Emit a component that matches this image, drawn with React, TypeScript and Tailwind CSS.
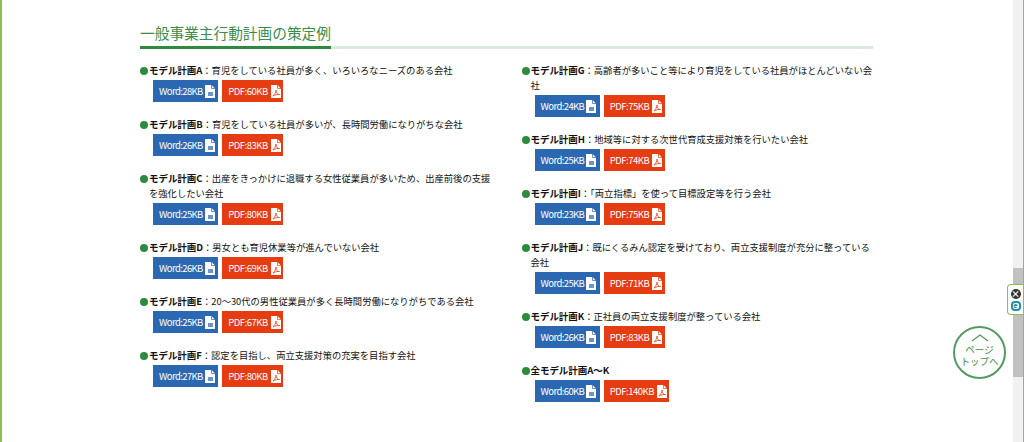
const leftPlans = [
  { name: "モデル計画A", text: "：育児をしている社員が多く、いろいろなニーズのある会社", word: "28", pdf: "60" },
  { name: "モデル計画B", text: "：育児をしている社員が多いが、長時間労働になりがちな会社", word: "26", pdf: "83" },
  { name: "モデル計画C", text: "：出産をきっかけに退職する女性従業員が多いため、出産前後の支援を強化したい会社", word: "25", pdf: "80" },
  { name: "モデル計画D", text: "：男女とも育児休業等が進んでいない会社", word: "26", pdf: "69" },
  { name: "モデル計画E", text: "：20〜30代の男性従業員が多く長時間労働になりがちである会社", word: "25", pdf: "67" },
  { name: "モデル計画F", text: "：認定を目指し、両立支援対策の充実を目指す会社", word: "27", pdf: "80" },
];

const rightPlans = [
  { name: "モデル計画G", text: "：高齢者が多いこと等により育児をしている社員がほとんどいない会社", word: "24", pdf: "75" },
  { name: "モデル計画H", text: "：地域等に対する次世代育成支援対策を行いたい会社", word: "25", pdf: "74" },
  { name: "モデル計画I", text: "：「両立指標」を使って目標設定等を行う会社", word: "23", pdf: "75" },
  { name: "モデル計画J", text: "：既にくるみん認定を受けており、両立支援制度が充分に整っている会社", word: "25", pdf: "71" },
  { name: "モデル計画K", text: "：正社員の両立支援制度が整っている会社", word: "26", pdf: "83" },
  { name: "全モデル計画A〜K", text: "", word: "60", pdf: "140" },
];

function WordIcon() {
  return (
    <svg width="10" height="13" viewBox="0 0 10 13" className="ml-[2px] shrink-0">
      <path d="M0 0h6.5L10 3.5V13H0z" fill="#ffffff" />
      <path d="M6.5 0v3.5H10" fill="none" stroke="#2c68b2" strokeWidth="0.7" />
      <rect x="3" y="7" width="5" height="4" fill="#2c68b2" opacity="0.7" />
    </svg>
  );
}

function PdfIcon() {
  return (
    <svg width="10" height="13" viewBox="0 0 10 13" className="ml-[3px] shrink-0">
      <path d="M0 0h6.5L10 3.5V13H0z" fill="#ffffff" />
      <path d="M6.5 0v3.5H10" fill="none" stroke="#e63c12" strokeWidth="0.7" />
      <path d="M2 11 C4 9 5 7 5 5 C5 8 7 10 8.5 9.5 C6.5 9 4 10 2 11z" fill="none" stroke="#e63c12" strokeWidth="0.8" />
    </svg>
  );
}

function PlanItem({ plan }: { plan: (typeof leftPlans)[number] }) {
  return (
    <div className="mb-[15px]">
      <p className="pl-[9px] -indent-[9px] text-[9.3px] leading-[15px] text-[#111111]">
        <span className="inline-block w-[8px] h-[8px] rounded-full bg-[#2e8b3d] mr-[1px] align-[-0.5px]" />
        <span className="font-bold text-[9.5px] tracking-[-0.05px]">{plan.name}</span>
        {plan.text}
      </p>
      <div className="flex gap-[4px] pl-[13px] mt-[2px]">
        <a className="flex items-center h-[22px] pl-[6px] pr-[3.5px] bg-[#2c68b2] text-white text-[9.5px] tracking-[-0.6px]">
          Word:{plan.word}KB
          <WordIcon />
        </a>
        <a className="flex items-center h-[22px] pl-[6px] pr-[2.5px] bg-[#e63c12] text-white text-[9.5px] tracking-[-0.5px]">
          PDF:{plan.pdf}KB
          <PdfIcon />
        </a>
      </div>
    </div>
  );
}

export default function App() {
  return (
    <div
      className="relative flex w-[1024px] h-[442px] overflow-hidden bg-white border-l-2 border-r border-[#8cc152]"
      style={{ fontFamily: '"Noto Sans CJK JP", "Noto Sans", sans-serif' }}
    >
      <main className="flex-1 pl-[138px] pt-[19px]">
        <div className="w-[733px]">
          <h2 className="text-[14.7px] leading-[27px] text-[#3b8c4a] font-normal">
            <span className="inline-block leading-[25px] pb-[1px] border-b-[3px] border-[#2e8b3d]">一般事業主行動計画の策定例</span>
          </h2>
          <div className="h-[3px] -mt-[3px] bg-[#d8ebdc]" />
          <div className="flex gap-[29.5px] mt-[14px]">
            <div className="w-[352px]">
              {leftPlans.map((p) => (
                <PlanItem key={p.name} plan={p} />
              ))}
            </div>
            <div className="w-[351.5px]">
              {rightPlans.map((p) => (
                <PlanItem key={p.name} plan={p} />
              ))}
            </div>
          </div>
        </div>
      </main>

      {/* scrollbar */}
      <div className="w-[10px] h-full bg-[#f1f1f1] pt-[268px]">
        <div className="h-[109px] bg-[#c1c1c1]" />
      </div>

      {/* side widget */}
      <div className="absolute left-[1005px] top-[284px] w-[16px] h-[31px] flex flex-col items-center justify-center gap-[2px] bg-white border-[1.5px] border-r-0 border-[#8cc152] rounded-l-[4px]">
        <span className="flex items-center justify-center w-[10px] h-[10px] rounded-full bg-[#333333] text-white text-[9px] leading-none font-bold">×</span>
        <span className="flex items-center justify-center w-[10px] h-[10px] rounded-[4px] border-2 border-[#1b8fb0] text-[#1b6f90] text-[7px] leading-none font-bold">e</span>
      </div>

      {/* page top */}
      <a className="absolute left-[951px] top-[326px] w-[53px] h-[53px] flex flex-col items-center rounded-full bg-white border-2 border-[#559a62] text-[#3f8a4e] text-[9.5px] leading-[12px]">
        <svg width="18" height="8" viewBox="0 0 18 8" className="mt-[6px] mb-[1px]">
          <path d="M1 7 L9 1 L17 7" fill="none" stroke="#559a62" strokeWidth="1.4" />
        </svg>
        <span>ページ</span>
        <span>トップへ</span>
      </a>
    </div>
  );
}
